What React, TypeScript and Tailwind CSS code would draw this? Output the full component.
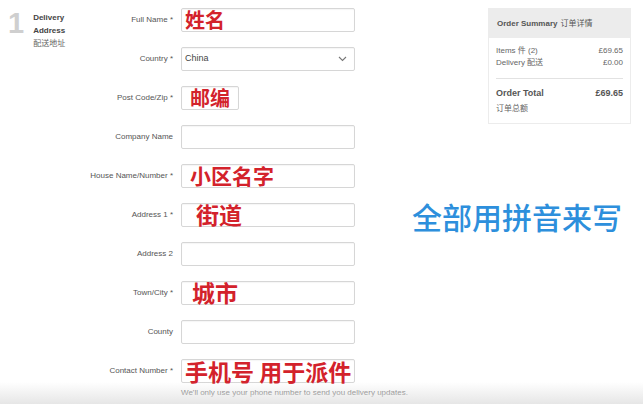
import React from "react";

const red = "text-[#d3222b]";

function Row({
  label,
  children,
  narrow,
}: {
  label: string;
  children?: React.ReactNode;
  narrow?: boolean;
}) {
  return (
    <div className="flex items-center h-[24px] gap-[8px]">
      <div className="w-[93px] text-right text-[8px] text-[#555] leading-none">{label}</div>
      <div
        className={`relative h-[24px] ${narrow ? "w-[58px]" : "w-[174px]"} border border-[#d6d6d6] rounded-[2px] bg-white shadow-[inset_0_1px_1px_rgba(0,0,0,0.04)]`}
      >
        {children}
      </div>
    </div>
  );
}

function Note({ text, cls }: { text: string; cls: string }) {
  return (
    <div
      className={`absolute whitespace-nowrap ${red} font-semibold leading-none ${cls}`}
      style={{ fontFamily: '"Noto Sans CJK SC", sans-serif' }}
    >
      {text}
    </div>
  );
}

export default function App() {
  return (
    <div
      className="relative w-[643px] h-[404px] bg-white overflow-hidden"
      style={{ fontFamily: '"Liberation Sans", "Noto Sans CJK SC", sans-serif' }}
    >
      <div className="flex">
        {/* section title */}
        <div className="flex w-[80px] pt-[9px] pl-[8px] gap-[9px]">
          <div className="text-[29px] font-bold text-[#cfcfcf] leading-none">1</div>
          <div className="pt-[2px] text-[8px] leading-[13px]">
            <div className="font-bold text-[#444]">Delivery</div>
            <div className="font-bold text-[#444]">Address</div>
            <div className="text-[#666]">配送地址</div>
          </div>
        </div>

        {/* form */}
        <div className="flex flex-col pt-[8px] gap-[15px]">
          <Row label="Full Name *">
            <Note text="姓名" cls="left-[3px] top-[1px] text-[20px]" />
          </Row>
          <Row label="Country *">
            <div className="flex items-center justify-between h-full pl-[3px] pr-[7px] text-[9px] text-[#444]">
              <span>China</span>
              <svg width="9" height="6" viewBox="0 0 9 6" fill="none">
                <path d="M1 1l3.5 3.5L8 1" stroke="#777" strokeWidth="1.1" />
              </svg>
            </div>
          </Row>
          <Row label="Post Code/Zip *" narrow>
            <Note text="邮编" cls="left-[8px] top-[1px] text-[20px]" />
          </Row>
          <Row label="Company Name" />
          <Row label="House Name/Number *">
            <Note text="小区名字" cls="left-[8px] top-[0px] text-[21px]" />
          </Row>
          <Row label="Address 1 *">
            <Note text="街道" cls="left-[14px] top-[-1px] text-[23px]" />
          </Row>
          <Row label="Address 2" />
          <Row label="Town/City *">
            <Note text="城市" cls="left-[10px] top-[-1px] text-[23px]" />
          </Row>
          <Row label="County" />
          <Row label="Contact Number *">
            <Note text="手机号 用于派件" cls="left-[3px] top-[0px] text-[23px]" />
          </Row>
          <div className="-mt-[9px] pl-[101px] text-[8px] text-[#555] leading-none">
            We'll only use your phone number to send you delivery updates.
          </div>
        </div>

        {/* summary */}
        <div className="ml-auto mr-[12px] mt-[8px] w-[143px] h-[116px] border border-[#ececec] bg-white flex flex-col">
          <div className="h-[29px] bg-[#ececec] flex items-center px-[8px] text-[8px] text-[#555]">
            <span className="font-bold">Order Summary</span>
            <span className="ml-[3px]">订单详情</span>
          </div>
          <div className="px-[7px] pt-[7px] text-[8px] text-[#666] leading-[12px]">
            <div className="flex justify-between">
              <span>Items 件 (2)</span>
              <span>£69.65</span>
            </div>
            <div className="flex justify-between">
              <span>Delivery 配送</span>
              <span>£0.00</span>
            </div>
            <div className="border-t border-[#e2e2e2] mt-[9px] pt-[8px]">
              <div className="flex justify-between text-[9px] font-bold text-[#555]">
                <span>Order Total</span>
                <span>£69.65</span>
              </div>
              <div className="mt-[4px] text-[#666]">订单总额</div>
            </div>
          </div>
        </div>
      </div>

      {/* annotation */}
      <div
        className="absolute left-[412px] top-[201px] text-[30px] font-medium text-[#2d8fdc] leading-none whitespace-nowrap"
        style={{ fontFamily: '"Noto Sans CJK SC", sans-serif' }}
      >
        全部用拼音来写
      </div>

      {/* bottom fade */}
      <div className="absolute left-0 right-0 bottom-0 h-[22px] bg-gradient-to-b from-white/0 to-[#e6e6e6] pointer-events-none" />
    </div>
  );
}
